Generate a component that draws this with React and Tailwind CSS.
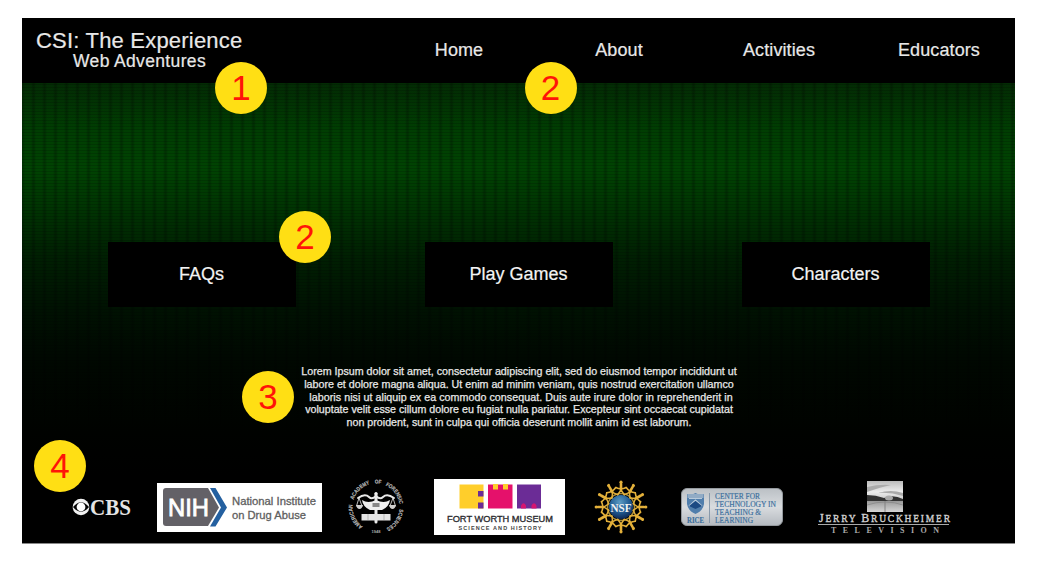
import React from "react";

const navItems = ["Home", "About", "Activities", "Educators"];
const tiles = ["FAQs", "Play Games", "Characters"];
const intro = [
  { text: "Lorem Ipsum dolor sit amet, consectetur adipiscing elit, sed do eiusmod tempor incididunt ut", fit: "" },
  { text: "labore et dolore magna aliqua. Ut enim ad minim veniam, quis nostrud exercitation ullamco", fit: "" },
  { text: "laboris nisi ut aliquip ex ea commodo consequat. Duis aute irure dolor in reprehenderit in", fit: "tracking-[0.05px] pl-1" },
  { text: "voluptate velit esse cillum dolore eu fugiat nulla pariatur. Excepteur sint occaecat cupidatat", fit: "" },
  { text: "non proident, sunt in culpa qui officia deserunt mollit anim id est laborum.", fit: "" },
];

function Badge({ n, className }) {
  return (
    <span
      className={`absolute z-10 flex size-[52px] items-center justify-center rounded-full bg-[#ffdf14] pb-[1px] text-[35px] leading-none text-[#ff1408] ${className}`}
    >
      {n}
    </span>
  );
}

function CbsLogo() {
  return (
    <svg width="60" height="32" viewBox="0 -4 60 32" className="shrink-0">
      <circle cx="9" cy="12" r="8.3" fill="#f2f2f2" />
      <path d="M1 12Q9 2.5 17 12Q9 21.5 1 12Z" fill="#050505" />
      <circle cx="9" cy="12" r="4.4" fill="#fff" />
      <text x="18" y="20" textLength="41" lengthAdjust="spacingAndGlyphs" fontFamily="Liberation Serif, serif" fontSize="23.5" fontWeight="700" fill="#e4e4e4">CBS</text>
    </svg>
  );
}

function NihLogo() {
  return (
    <svg width="165" height="49" viewBox="0 0 165 49" className="shrink-0">
      <rect width="165" height="49" fill="#fff" />
      <path d="M9 5H51L62 24.5L51 43H9Q6 43 6 40V8Q6 5 9 5Z" fill="#636167" />
      <path d="M53 5H58.5L70 24.5L58.5 43.5H53L64 24.5Z" fill="#2460a0" />
      <text x="11" y="33" textLength="41" lengthAdjust="spacingAndGlyphs" fontFamily="Liberation Sans, sans-serif" fontSize="24" fill="#fff" stroke="#fff" strokeWidth=".8">NIH</text>
      <g fontFamily="Liberation Sans, sans-serif" fontSize="11" fill="#606060" stroke="#606060" strokeWidth=".3">
        <text x="75" y="21.5" textLength="84" lengthAdjust="spacingAndGlyphs">National Institute</text>
        <text x="75" y="35.5" textLength="74" lengthAdjust="spacingAndGlyphs">on Drug Abuse</text>
      </g>
    </svg>
  );
}

const sealWords = [
  { word: "AMERICAN", start: 14, length: 25 },
  { word: "ACADEMY", start: 44, length: 23 },
  { word: "OF", start: 72, length: 6.5 },
  { word: "FORENSIC", start: 83, length: 24 },
  { word: "SCIENCES", start: 112, length: 24 },
];

function ForensicLogo() {
  return (
    <svg width="56" height="56" viewBox="0 0 56 56" className="shrink-0">
      <defs>
        <path id="seal-ring" d="M28 51.5A23.5 23.5 0 0 1 28 4.5A23.5 23.5 0 0 1 28 51.5" />
      </defs>
      {sealWords.map(({ word, start, length }) => (
        <text key={word} fontFamily="Liberation Sans, sans-serif" fontSize="5.600" fontWeight="700" fill="#b8b8b8" stroke="#b8b8b8" strokeWidth=".15">
          <textPath href="#seal-ring" startOffset={start} textLength={length} lengthAdjust="spacingAndGlyphs">{word}</textPath>
        </text>
      ))}
      <g fill="none" stroke="#e8e8e8" strokeLinecap="round">
        <path d="M10 19Q17 14 21 18Q24 21 28 17Q32 21 35 18Q39 14 46 19" strokeWidth="2" />
        <path d="M28 15V43" strokeWidth="3" />
        <path d="M11 19L8.500 27M11 19L14 27M45 19L42 27M45 19L47.500 27" strokeWidth=".8" />
      </g>
      <circle cx="28" cy="14.500" r="1.600" fill="#eee" />
      <path d="M8 26H15Q14 30 11.500 30Q9 30 8 26ZM41 26H48Q47 30 44.500 30Q42 30 41 26Z" fill="#d0d0d0" />
      <path d="M14 21Q20 25 28 21Q36 25 42 21Q41 28 34 31H22Q15 28 14 21Z" fill="#efefef" />
      <rect x="24.500" y="24" width="7" height="4" fill="#888" />
      <path d="M13.500 35H42.500V41.500H13.500Z" fill="#e4e4e4" />
      <path d="M20 35V41M36 35V41" stroke="#aaa" strokeWidth=".8" />
      <text x="28" y="54" textAnchor="middle" fontFamily="Liberation Sans, sans-serif" fontSize="4" fontWeight="700" fill="#aaa">1948</text>
    </svg>
  );
}

function MuseumLogo() {
  return (
    <svg width="131" height="56" viewBox="0 0 131 56" className="shrink-0">
      <rect width="131" height="56" fill="#fff" />
      <path d="M25.5 5.5H49.5V29.5H25.5Z" fill="#ffce2b" />
      <path d="M44 12H49.5V17.5H44ZM44 23.5H49.5V29.5H44Z" fill="#6b2c96" />
      <path d="M54 5.5H78.5V29.5H54Z" fill="#e5116b" />
      <path d="M59 5H64V10.5H59ZM69 5H74V10.5H69Z" fill="#ffce2b" />
      <path d="M83 5.5H107V29.5H83Z" fill="#6b2c96" />
      <path d="M87 29.500V26.500Q89.500 22 92 26.500V29.500ZM97.500 29.500V26.500Q100 22 102.500 26.500V29.500Z" fill="#d51571" />
      <text x="13" y="43" textLength="106" lengthAdjust="spacingAndGlyphs" fontFamily="Liberation Sans, sans-serif" fontSize="8.500" fill="#29292d" stroke="#29292d" strokeWidth=".3">FORT WORTH MUSEUM</text>
      <text x="24.500" y="51" textLength="83" fontFamily="Liberation Sans, sans-serif" fontSize="5.500" fontWeight="700" fill="#444">SCIENCE AND HISTORY</text>
    </svg>
  );
}

const rays = Array.from({ length: 12 }, (_, i) => i * 30);

function NsfLogo() {
  return (
    <svg width="54" height="54" viewBox="0 0 54 54" className="shrink-0">
      <defs>
        <radialGradient id="globe" cx=".45" cy=".3" r=".7">
          <stop offset="0" stopColor="#5c9bc3" />
          <stop offset=".6" stopColor="#205a91" />
          <stop offset="1" stopColor="#0d2855" />
        </radialGradient>
      </defs>
      <circle cx="27" cy="27" r="13.500" fill="none" stroke="#a58a3c" strokeWidth="1.600" />
      {rays.map((a) => (
        <g key={a} transform={`rotate(${a} 27 27)`} stroke="#e3b03a" fill="#e3b03a" strokeLinecap="round">
          <path d="M27 10V4" strokeWidth="2.600" />
          <path d="M21.800 7.500Q27 10 32.200 7.500" fill="none" strokeWidth="1.600" />
          <path d="M27 10L23.500 15M27 10L30.500 15" strokeWidth="1.400" />
          <circle cx="27" cy="2.200" r="1.600" stroke="none" />
        </g>
      ))}
      <circle cx="27" cy="27" r="12" fill="url(#globe)" />
      <text x="16.500" y="31.500" textLength="21" lengthAdjust="spacingAndGlyphs" fontFamily="Liberation Serif, serif" fontSize="12.500" fontWeight="700" fill="#f3f3f3">NSF</text>
    </svg>
  );
}

function RiceLogo() {
  return (
    <svg width="102" height="38" viewBox="0 0 102 38" className="shrink-0">
      <defs>
        <linearGradient id="plate" x2="0" y2="1">
          <stop stopColor="#bbc0c5" />
          <stop offset=".5" stopColor="#d9dcdf" />
          <stop offset="1" stopColor="#b4b9bf" />
        </linearGradient>
      </defs>
      <rect x=".5" y=".5" width="101" height="37" rx="5.500" fill="url(#plate)" stroke="#94999e" />
      <path d="M6 6Q10 8 14.500 5Q19 8 23 6V16Q22 23 14.500 26Q7 23 6 16Z" fill="#507eac" />
      <path d="M6.500 6H22.500V10H6.500Z" fill="#91abc5" />
      <path d="M8 10.500H21M8 18L14.500 12L21 18" stroke="#b8cadb" strokeWidth="1.200" fill="none" />
      <path d="M8 18L14.500 13L21 18L14.500 21Z" fill="#1b4983" />
      <path d="M28.500 5V35" stroke="#8799ab" />
      <g fontFamily="Liberation Serif, serif" fill="#396e9d" stroke="#396e9d" strokeWidth=".15">
        <text x="6" y="34.500" textLength="17" lengthAdjust="spacingAndGlyphs" fontSize="8" fontWeight="700">RICE</text>
        <g fontSize="7.500">
          <text x="34" y="11" textLength="45" lengthAdjust="spacingAndGlyphs">CENTER FOR</text>
          <text x="34" y="19" textLength="61" lengthAdjust="spacingAndGlyphs">TECHNOLOGY IN</text>
          <text x="34" y="27" textLength="46" lengthAdjust="spacingAndGlyphs">TEACHING &amp;</text>
          <text x="34" y="35" textLength="38" lengthAdjust="spacingAndGlyphs">LEARNING</text>
        </g>
      </g>
    </svg>
  );
}

function BruckheimerLogo() {
  return (
    <svg width="134" height="56" viewBox="0 0 134 56" className="shrink-0">
      <defs>
        <linearGradient id="sky" x2="0" y2="1">
          <stop stopColor="#bbb" />
          <stop offset=".35" stopColor="#ededed" />
          <stop offset="1" stopColor="#999" />
        </linearGradient>
        <linearGradient id="road" x2="0" y2="1">
          <stop stopColor="#999" />
          <stop offset="1" stopColor="#d6d6d6" />
        </linearGradient>
      </defs>
      <rect x="49" y="1" width="36" height="31" fill="url(#sky)" />
      <path d="M49 7Q61 4 73 5Q63 7 49 12ZM60 13Q73 9 85 13V16Q72 12 60 13Z" fill="#aaa" />
      <path d="M49 15Q58 15 66 18Q75 14 85 19V21H49Z" fill="#333" />
      <ellipse cx="71" cy="18" rx="4" ry="2.500" fill="#aaa" />
      <path d="M49 21H85V32H49Z" fill="url(#road)" />
      <path d="M67 21V32" stroke="#777" strokeWidth=".8" />
      <path d="M49 25Q58 22 67 22Q77 22 85 25" stroke="#888" strokeWidth=".8" fill="none" />
      <text x="1" y="42" textLength="131" fontFamily="Liberation Serif, serif" fontSize="9.500" fill="#d2d2d2" stroke="#d2d2d2" strokeWidth=".35">
        <tspan fontSize="12">J</tspan>ERRY <tspan fontSize="12">B</tspan>RUCKHEIMER
      </text>
      <path d="M0 44.500H131" stroke="#aaa" />
      <text x="13" y="52.500" textLength="108" fontFamily="Liberation Serif, serif" fontSize="8" fontWeight="700" fill="#aaa">TELEVISION</text>
    </svg>
  );
}

export default function App() {
  return (
    <div className="h-[565px] w-[1044px] overflow-hidden bg-white pl-[22px] pt-[18px] font-['Liberation_Sans',Arial,sans-serif] text-[#e8e8e8]">
      <div className="flex h-[526px] w-[993px] flex-col border-b border-[#888] bg-black">
        <header className="relative flex h-[65px] shrink-0 bg-black [-webkit-text-stroke:0.2px_#e8e8e8]">
          <div className="w-[357px] pl-[14px] pt-[11px] whitespace-nowrap">
            <h1 className="text-[22px] leading-[24px] tracking-[0.2px]">CSI: The Experience</h1>
            <p className="-mt-[1px] pl-[37px] text-[17.500px] leading-[18px] tracking-[0.35px]">Web Adventures</p>
          </div>
          <nav className="flex h-full items-center text-[18px] tracking-[0.1px]">
            {navItems.map((item) => (
              <a key={item} className="w-40 text-center last:w-[156px] last:pl-1">{item}</a>
            ))}
          </nav>
          <Badge n="1" className="left-[193px] top-[44px] [-webkit-text-stroke:0]" />
          <Badge n="2" className="left-[502.500px] top-[44px] [-webkit-text-stroke:0]" />
        </header>

        <main className="flex h-[392px] shrink-0 flex-col bg-[repeating-linear-gradient(90deg,rgba(0,0,0,.22)_0px,rgba(0,0,0,.22)_1px,transparent_3px,transparent_9px,rgba(0,0,0,.22)_11px),repeating-linear-gradient(0deg,rgba(0,0,0,.16)_0px,rgba(0,0,0,.16)_1px,transparent_1px,transparent_3px),linear-gradient(180deg,#032b04_0px,#003d02_45px,#004302_85px,#003602_120px,#001f02_175px,#001202_225px,#000801_275px,#000200_350px,#000_392px)]">
          <section className="flex gap-[129px] pl-[85.500px] pt-[159px]">
            {tiles.map((tile, i) => (
              <div key={tile} className="relative flex h-[65px] w-[188px] items-center justify-center bg-black text-[18px] text-[#f3f3f3] [-webkit-text-stroke:0.2px_#f3f3f3]">
                {tile}
                {i === 0 && <Badge n="2" className="-top-[31px] left-[171.500px] [-webkit-text-stroke:0]" />}
              </div>
            ))}
          </section>
          <section className="relative ml-[278px] mt-[58px] w-[438px] text-center text-[10.700px] leading-[12.800px] whitespace-nowrap">
            <div className="[-webkit-text-stroke:0.25px_#e8e8e8]">
              {intro.map(({ text, fit }) => (
                <p key={text} className={fit}>{text}</p>
              ))}
            </div>
            <Badge n="3" className="-left-[58px] top-[6px]" />
          </section>
        </main>

        <footer className="relative flex grow items-center bg-black pb-1 pl-[50px]">
          <CbsLogo />
          <div className="ml-[25px]"><NihLogo /></div>
          <div className="ml-[26px]"><ForensicLogo /></div>
          <div className="ml-[30px]"><MuseumLogo /></div>
          <div className="ml-[29px]"><NsfLogo /></div>
          <div className="ml-[33px]"><RiceLogo /></div>
          <div className="ml-[35px] pt-[2px]"><BruckheimerLogo /></div>
          <Badge n="4" className="left-[12px] -top-[35px]" />
        </footer>
      </div>
    </div>
  );
}
